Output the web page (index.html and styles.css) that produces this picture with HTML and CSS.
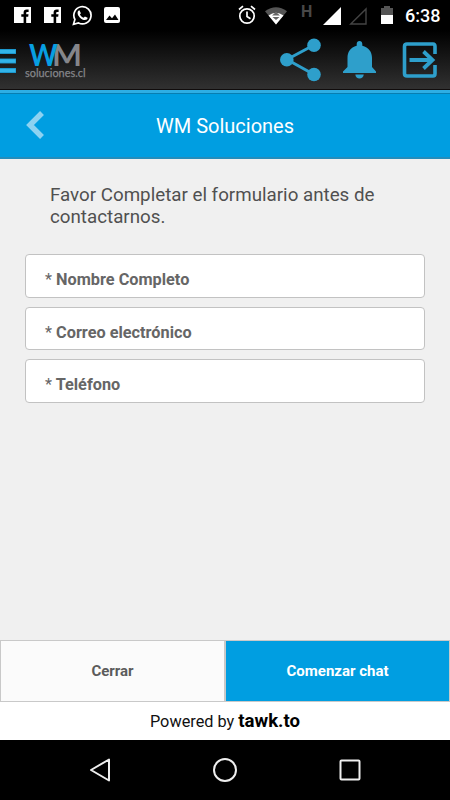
FILE: index.html
```html
<!DOCTYPE html>
<html lang="es">
<head>
<meta charset="utf-8">
<meta name="viewport" content="width=device-width, initial-scale=1">
<title>WM Soluciones</title>
<link rel="stylesheet" href="styles.css">
</head>
<body>
<div class="app">
  <div class="top">
    <div class="status">
      <div class="notifications">
        <svg width="17" height="17" viewBox="0 0 17 17"><path fill="#fff" fill-rule="evenodd" d="M0 0h17v16H12.200v-6.200h2l.3-2.500h-2.300V6c0-.8.400-1.100 1.100-1.100h1.300V2.600h-2C10.600 2.600 9.600 3.800 9.600 5.600v1.700H7.300v2.500h2.300V16H0z"/></svg>
        <svg width="17" height="17" viewBox="0 0 17 17"><path fill="#fff" fill-rule="evenodd" d="M0 0h17v16H12.200v-6.200h2l.3-2.500h-2.300V6c0-.8.400-1.100 1.100-1.100h1.300V2.600h-2C10.600 2.600 9.600 3.800 9.600 5.600v1.700H7.300v2.500h2.300V16H0z"/></svg>
        <svg class="whatsapp" width="21" height="21" viewBox="0 0 21 21"><path d="M1.500 19.300l1.400-4.900A8.600 8.600 0 1 1 6.500 17.900z" fill="none" stroke="#fff" stroke-width="1.700"/><path fill="#fff" d="M7.400 5.300c-.8.100-1.800 1-1.800 2.600 0 3 4 7.100 7.300 7.100 1.500 0 2.800-1 2.700-2.300l-2.700-1.300-1.200 1.400c-1.800-.6-3-1.800-3.800-3.400l1-1.200z"/></svg>
        <svg class="photo" width="17" height="17" viewBox="0 0 17 17"><rect width="16" height="16" rx="2" fill="#fff"/><path d="M2 13l3.500-4.500L8 11.300l3-3.800 3.500 5.500z" fill="#050505"/></svg>
      </div>
      <div class="system">
        <svg width="18" height="20" viewBox="0 0 18 20"><g fill="none" stroke="#fff" stroke-width="1.700"><circle cx="9" cy="11" r="7.200"/><path d="M9 6.500v5l3.500 2.200M1 4.500l4-3.300M17 4.500l-4-3.300"/></g></svg>
        <svg class="wifi" width="22" height="18" viewBox="0 0 22 18"><path d="M0 4.200Q11-3.800 22 4.200L11 17.500z" fill="#555"/><path d="M3.500 8.500Q11 3 18.500 8.500L11 17.500z" fill="#fff"/><path d="M7 8.500L11 5l4 3.500zM7.500 10h7L11 13z" fill="#666"/></svg>
        <span class="network">H</span>
        <svg class="signal" width="18" height="18" viewBox="0 0 18 18"><path d="M18 0v18H0z" fill="#fff"/></svg>
        <svg class="signal-empty" width="18" height="18" viewBox="0 0 18 18"><path d="M17 2v15H1.700z" fill="none" stroke="#444" stroke-width="1.400"/></svg>
        <svg class="battery" width="12" height="18" viewBox="0 0 12 18"><path d="M3 0h6v2h3v7H0V2h3z" fill="#555"/><path d="M0 9h12v9H0z" fill="#fff"/></svg>
        <span class="clock">6:38</span>
      </div>
    </div>
    <div class="toolbar">
      <svg class="menu" width="16" height="25" viewBox="0 0 16 25"><path d="M0 2.500h16M0 12h16M0 21.500h16" stroke="#168fc5" stroke-width="5"/><path d="M0 2.500h15.500M0 12h15.500M0 21.500h15.500" stroke="#32b4e9" stroke-width="3.500"/></svg>
      <div class="logo">
        <svg width="64" height="25" viewBox="0 0 64 25" overflow="visible" font-family="Lato" font-weight="700" font-size="30"><text x="27" y="24" fill="#85868a" textLength="30" lengthAdjust="spacingAndGlyphs">M</text><text x="4" y="24" fill="#079fe2" textLength="28.500" lengthAdjust="spacingAndGlyphs">W</text></svg>
        <svg width="64" height="13" viewBox="0 0 64 13" overflow="visible" font-family="Lato" font-size="11.500"><text x="0" y="10" fill="#85868a" stroke="#85868a" stroke-width=".25" textLength="60.500" lengthAdjust="spacingAndGlyphs">soluciones.cl</text></svg>
      </div>
      <div class="actions">
        <svg width="42" height="44" viewBox="0 0 42 44"><path d="M34 7L7 21.500l27 15" fill="none" stroke="#2e9fcb" stroke-width="3"/><g fill="#2e9fcb"><circle cx="34" cy="7.300" r="6.800"/><circle cx="6.800" cy="21.800" r="6.800"/><circle cx="34" cy="36.500" r="6.800"/></g></svg>
        <svg class="bell" width="34" height="40" viewBox="0 0 34 40"><path fill="#2e9fcb" d="M16.500 1c1.700 0 2.800 1.200 2.800 3v1.800C25.700 7.300 29 12 29 18v9l4 4.500V33H0v-1.500L4.500 27v-9c0-6 3-10.700 9.200-12.200V4c0-1.800 1.100-3 2.800-3zM12.300 34.500h8.500c-.4 2.600-2 4-4.300 4s-3.900-1.400-4.200-4z"/></svg>
        <svg class="exit" width="36" height="36" viewBox="0 0 36 36"><g fill="none" stroke="#2e9fcb" stroke-width="3.600"><path d="M33 12V4.500Q33 2 31 2H5Q2.500 2 2.500 4.500v27Q2.500 34 5 34h26q2 0 2-2.500V23"/><path d="M7.500 18h23M21.500 9.500L30.500 18l-9 8.500" stroke-width="3.800"/></g></svg>
      </div>
    </div>
  </div>
  <header class="titlebar">
    <svg class="back" width="18" height="28" viewBox="0 0 18 28"><path d="M16 2L4 14l12 12" fill="none" stroke="#8dd2f1" stroke-width="5.500"/></svg>
    <h1 class="title">WM Soluciones</h1>
  </header>
  <main class="form">
    <p class="intro">Favor Completar el formulario antes de contactarnos.</p>
    <div class="field"><span class="star">*</span> Nombre Completo</div>
    <div class="field"><span class="star">*</span> Correo electrónico</div>
    <div class="field"><span class="star">*</span> Teléfono</div>
  </main>
  <div class="buttons">
    <button class="btn">Cerrar</button>
    <button class="btn primary">Comenzar chat</button>
  </div>
  <footer class="powered">Powered by&nbsp;<b class="brand">tawk.to</b></footer>
  <nav class="nav">
    <svg width="24" height="26" viewBox="0 0 24 26"><path d="M20 2.500v21L2 13z" fill="none" stroke="#eee" stroke-width="2" stroke-linejoin="round"/></svg>
    <svg width="26" height="26" viewBox="0 0 26 26"><circle cx="12" cy="13" r="11" fill="none" stroke="#eee" stroke-width="2"/></svg>
    <svg width="24" height="24" viewBox="0 0 24 24"><rect x="2.500" y="2.500" width="19" height="19" rx="1" fill="none" stroke="#eee" stroke-width="2"/></svg>
  </nav>
</div>
</body>
</html>
```
FILE: styles.css
```css
* { box-sizing: border-box; }
body { margin: 0; font-family: Roboto, sans-serif; }
svg { display: block; flex: none; }
.app { width: 450px; height: 800px; display: flex; flex-direction: column; background: #f0f0f0; overflow: hidden; }
.top { height: 90px; flex: none; background: linear-gradient(#000 30px, #303030 88px); border-bottom: 1px solid #100c0c; }
.status { height: 30px; display: flex; justify-content: space-between; }
.notifications { display: flex; gap: 13px; padding: 7px 0 0 14px; }
.whatsapp { margin: -2px -2px 0; }
.system { display: flex; align-items: flex-start; padding: 5px 10px 0 0; }
.wifi { margin: 2px 0 0 9px; }
.network { width: 11px; margin-left: 14px; font-size: 16px; line-height: 13px; font-weight: 700; color: #484848; }
.signal { margin: 2px 0 0 11px; }
.signal-empty { margin: 2px 0 0 8px; }
.battery { margin: 1px 0 0 14px; }
.clock { width: 35px; margin-left: 12px; font-size: 18px; line-height: 22px; font-weight: 500; color: #fff; white-space: nowrap; }
.toolbar { height: 59px; display: flex; padding: 0 11px 0 0; }
.menu { margin-top: 19px; }
.logo { margin: 12px 0 0 9px; }
.actions { display: flex; margin-left: auto; padding-top: 8px; }
.bell { margin: 2px 0 0 21px; }
.exit { margin: 4px 1px 0 25px; }
.titlebar { height: 69px; flex: none; display: flex; align-items: center; background: #009ee1; border-top: 3px solid #2eaee4; border-bottom: 2px solid #248dbb; box-shadow: inset 0 1px #087eb1; }
.back { margin-left: 26px; }
.title { flex: 1; margin: 2px 44px 0 0; text-align: center; font-size: 20px; line-height: 24px; font-weight: 400; color: #fff; }
.form { flex: 1; padding: 25px 25px 0; }
.intro { margin: 0 25px 26px; font-size: 18.750px; line-height: 22px; color: #505050; }
.field { height: 43.500px; margin-bottom: 9px; padding: 3px 19px 0; border: 1px solid #c2c2c2; border-radius: 4px; background: #fff; font-size: 16.300px; line-height: 44px; font-weight: 700; color: #666; }
.star { font-weight: 400; }
.buttons { height: 62px; flex: none; display: grid; grid-template-columns: 1fr 1fr; }
.btn { padding: 0; border: 1px solid #c9c9c9; background: #fbfbfb; font: 700 15px Roboto, sans-serif; color: #5b5b5b; }
.primary { background: #009ee1; color: #fff; }
.powered { height: 38px; flex: none; display: flex; align-items: baseline; justify-content: center; padding-top: 8px; background: #fff; color: #111; font-size: 16.300px; line-height: 22px; }
.brand { font-size: 18.600px; color: #000; }
.nav { height: 60px; flex: none; display: flex; align-items: center; justify-content: space-between; padding: 0 88px 0 89px; background: #000; }
```
